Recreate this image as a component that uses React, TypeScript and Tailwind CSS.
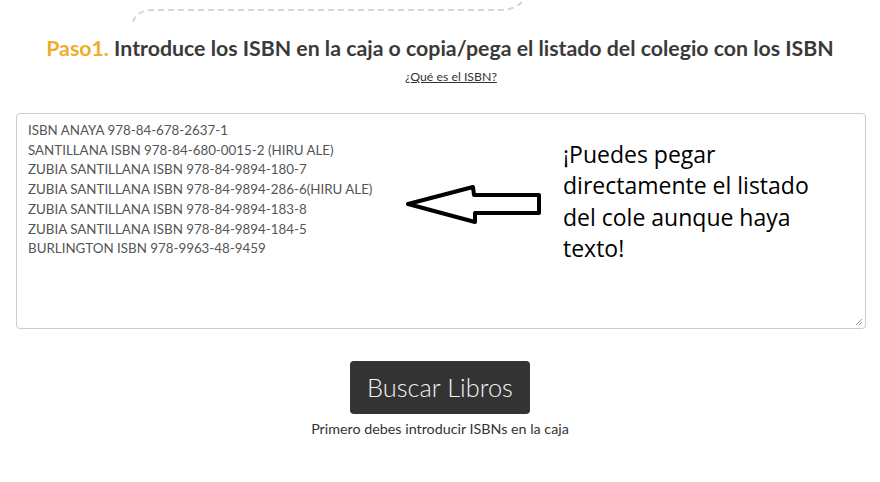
export default function App() {
  const lines = [
    'ISBN ANAYA 978-84-678-2637-1',
    'SANTILLANA ISBN 978-84-680-0015-2 (HIRU ALE)',
    'ZUBIA SANTILLANA ISBN 978-84-9894-180-7',
    'ZUBIA SANTILLANA ISBN 978-84-9894-286-6(HIRU ALE)',
    'ZUBIA SANTILLANA ISBN 978-84-9894-183-8',
    'ZUBIA SANTILLANA ISBN 978-84-9894-184-5',
    'BURLINGTON ISBN 978-9963-48-9459',
  ];

  return (
    <div className="w-[880px] h-[482px] bg-white overflow-hidden relative font-['Lato',sans-serif]">
      {/* dashed path decoration */}
      <svg className="absolute left-0 top-0" width="880" height="30" viewBox="0 0 880 30">
        <path
          d="M133 22 Q136 11 152 10 L505 10 Q518 8 526 -2"
          fill="none"
          stroke="#d6d6d6"
          strokeWidth="2"
          strokeDasharray="6 4"
        />
      </svg>

      <div className="flex flex-col items-center pt-[35px]">
        <h2 className="text-[21.3px] font-bold text-[#3a3a3a] leading-[26px] whitespace-nowrap">
          <span className="text-[#f0ad2a]">Paso1.</span> Introduce los ISBN en la caja o copia/pega el listado del colegio con los ISBN
        </h2>
        <a className="mt-[9px] ml-[22px] text-[12.3px] text-[#333] underline leading-[14px]">¿Qué es el ISBN?</a>
      </div>

      <div className="ml-[16px] mr-[14px] mt-[29px] h-[216px] border border-[#cccccc] rounded-[4px] relative flex">
        <div className="pl-[11px] pt-[7px] text-[13.35px] leading-[19.7px] text-[#555]">
          {lines.map((l) => (
            <div key={l}>{l}</div>
          ))}
        </div>
        <svg className="absolute left-[385px] top-[65px]" width="150" height="50" viewBox="0 0 150 50">
          <path
            d="M6 25 L71 8 L72 16 L137 16 L137 34 L73 34 L73 43 Z"
            fill="none"
            stroke="#000"
            strokeWidth="4"
            strokeLinejoin="round"
          />
        </svg>
        <div className="absolute left-[546px] top-[25px] text-[23px] leading-[31.3px] text-black font-['Open_Sans',sans-serif] w-[262px]">
          ¡Puedes pegar directamente el listado del cole aunque haya texto!
        </div>
        <svg className="absolute right-[2px] bottom-[2px]" width="8" height="8" viewBox="0 0 8 8">
          <path d="M7 1 L1 7 M7 4 L4 7" stroke="#999" strokeWidth="1" />
        </svg>
      </div>

      <div className="flex flex-col items-center mt-[32px]">
        <button className="w-[180px] h-[53px] bg-[#333333] rounded-[4px] text-[25.4px] font-light text-[#f2f2f2]">
          Buscar Libros
        </button>
        <p className="mt-[6px] text-[14.3px] text-[#333] leading-[18px]">Primero debes introducir ISBNs en la caja</p>
      </div>
    </div>
  );
}
